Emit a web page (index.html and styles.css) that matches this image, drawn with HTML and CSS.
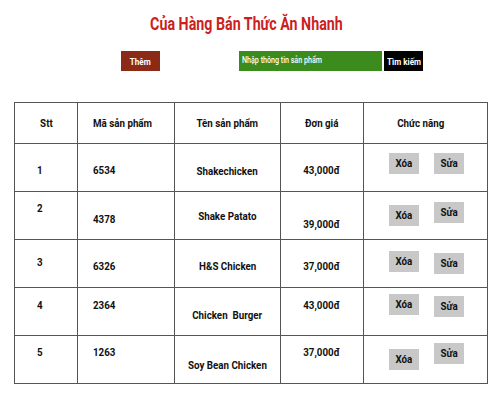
FILE: index.html
```html
<!DOCTYPE html>
<html lang="vi">
<head>
<meta charset="utf-8">
<title>Của Hàng Bán Thức Ăn Nhanh</title>
<link rel="stylesheet" href="styles.css">
</head>
<body>
<div class="page">
  <h1 class="title"><span class="t">Của Hàng Bán Thức Ăn Nhanh</span></h1>
  <div class="toolbar">
    <button class="btn-add"><span class="t">Thêm</span></button>
    <div class="search">
      <div class="search-input"><span class="t tl">Nhập thông tin sản phẩm</span></div>
      <button class="btn-search"><span class="t">Tìm kiếm</span></button>
    </div>
  </div>
  <table class="grid">
    <colgroup>
      <col class="c1"><col class="c2"><col class="c3"><col class="c4"><col class="c5">
    </colgroup>
    <thead>
      <tr>
        <th class="center"><span class="t">Stt</span></th>
        <th class="code"><span class="t tl">Mã sản phẩm</span></th>
        <th class="center"><span class="t">Tên sản phẩm</span></th>
        <th class="center"><span class="t">Đơn giá</span></th>
        <th class="center hdr-act"><span class="t">Chức năng</span></th>
      </tr>
    </thead>
    <tbody>
      <tr>
        <td class="stt d2"><span class="t tl">1</span></td>
        <td class="code d2"><span class="t tl">6534</span></td>
        <td class="center d3"><span class="t">Shakechicken</span></td>
        <td class="center d2"><span class="t">43,000đ</span></td>
        <td class="actions"><div class="acts"><span class="act u4"><span class="t">Xóa</span></span><span class="act u4"><span class="t">Sửa</span></span></div></td>
      </tr>
      <tr>
        <td class="stt u8"><span class="t tl">2</span></td>
        <td class="code d3"><span class="t tl">4378</span></td>
        <td class="center"><span class="t">Shake Patato</span></td>
        <td class="center d8"><span class="t">39,000đ</span></td>
        <td class="actions"><div class="acts"><span class="act"><span class="t">Xóa</span></span><span class="act u3"><span class="t">Sửa</span></span></div></td>
      </tr>
      <tr>
        <td class="stt u2"><span class="t tl">3</span></td>
        <td class="code d2"><span class="t tl">6326</span></td>
        <td class="center d2"><span class="t">H&amp;S Chicken</span></td>
        <td class="center d2"><span class="t">37,000đ</span></td>
        <td class="actions"><div class="acts"><span class="act u2"><span class="t">Xóa</span></span><span class="act"><span class="t">Sửa</span></span></div></td>
      </tr>
      <tr>
        <td class="stt u7"><span class="t tl">4</span></td>
        <td class="code u7"><span class="t tl">2364</span></td>
        <td class="center d3"><span class="t">Chicken&nbsp; Burger</span></td>
        <td class="center u7"><span class="t">43,000đ</span></td>
        <td class="actions"><div class="acts"><span class="act u7"><span class="t">Xóa</span></span><span class="act u5"><span class="t">Sửa</span></span></div></td>
      </tr>
      <tr>
        <td class="stt u8"><span class="t tl">5</span></td>
        <td class="code u8"><span class="t tl">1263</span></td>
        <td class="center d5"><span class="t">Soy Bean Chicken</span></td>
        <td class="center u8"><span class="t">37,000đ</span></td>
        <td class="actions"><div class="acts"><span class="act"><span class="t">Xóa</span></span><span class="act u6"><span class="t">Sửa</span></span></div></td>
      </tr>
    </tbody>
  </table>
</div>
</body>
</html>
```
FILE: styles.css
```css
* { box-sizing: border-box; }
html, body { margin: 0; padding: 0; background: #fff; }
body {
  font-family: "Roboto", "Liberation Sans", sans-serif;
  color: #111;
}
/* condensed look: the reference uses a narrow face */
.t {
  display: inline-block;
  transform: scaleX(0.85);
  transform-origin: center;
}
.t.tl { transform-origin: left center; }
.page { width: 500px; height: 400px; padding-top: 12px; }
.title {
  margin: 0;
  text-align: center;
  font-size: 19px;
  line-height: 24px;
  font-weight: 700;
  color: #cc1f1f;
  padding-right: 8px;
}
.title .t { transform: scaleX(0.75); }
.toolbar {
  display: flex;
  align-items: center;
  margin-top: 15px;
  padding-left: 121px;
  height: 20px;
}
.btn-add, .btn-search {
  border: 0;
  margin: 0;
  font-family: inherit;
  font-size: 9.5px;
  font-weight: 700;
  color: #fff;
  height: 20px;
  padding: 0;
  white-space: nowrap;
}
.btn-add { width: 39px; background: #8b2a16; }
.search { display: flex; margin-left: 79px; gap: 2px; }
.search-input {
  width: 143px;
  height: 20px;
  background: #3b8b1d;
  color: #fff;
  font-size: 9.5px;
  font-weight: 500;
  line-height: 18px;
  padding-left: 3px;
  white-space: nowrap;
}
.search-input .t { transform: scaleX(0.75); }
.btn-search { width: 39px; background: #000; }
.grid {
  margin: 31px 0 0 14px;
  width: 473px;
  border-collapse: collapse;
  table-layout: fixed;
  font-size: 11.5px;
  font-weight: 700;
}
.c1 { width: 63px; }
.c2 { width: 97px; }
.c3 { width: 106px; }
.c4 { width: 83px; }
.c5 { width: 124px; }
.grid th, .grid td {
  border: 1px solid #555;
  padding: 0;
  vertical-align: middle;
  line-height: 14px;
  white-space: nowrap;
}
.grid th { height: 41px; font-weight: 700; }
.grid td { height: 48px; }
.center { text-align: center; }
.hdr-act { padding-right: 10px !important; }
.stt { text-align: left; padding-left: 22px !important; }
.code { text-align: left; padding-left: 15px !important; }
.actions { padding-left: 25px !important; }
.acts { display: flex; align-items: center; gap: 15px; height: 46px; }
.act {
  display: block;
  width: 30px;
  height: 21px;
  line-height: 21px;
  text-align: center;
  background: #c8c8c8;
}
td.d2 { padding-top: 4px; }
td.d3 { padding-top: 6px; }
td.d5 { padding-top: 10px; }
td.d8 { padding-top: 16px; }
td.u2 { padding-bottom: 4px; }
td.u7 { padding-bottom: 14px; }
td.u8 { padding-bottom: 16px; }
.act.u2 { margin-bottom: 4px; }
.act.u3 { margin-bottom: 6px; }
.act.u4 { margin-bottom: 8px; }
.act.u5 { margin-bottom: 10px; }
.act.u6 { margin-bottom: 12px; }
.act.u7 { margin-bottom: 14px; }
```
